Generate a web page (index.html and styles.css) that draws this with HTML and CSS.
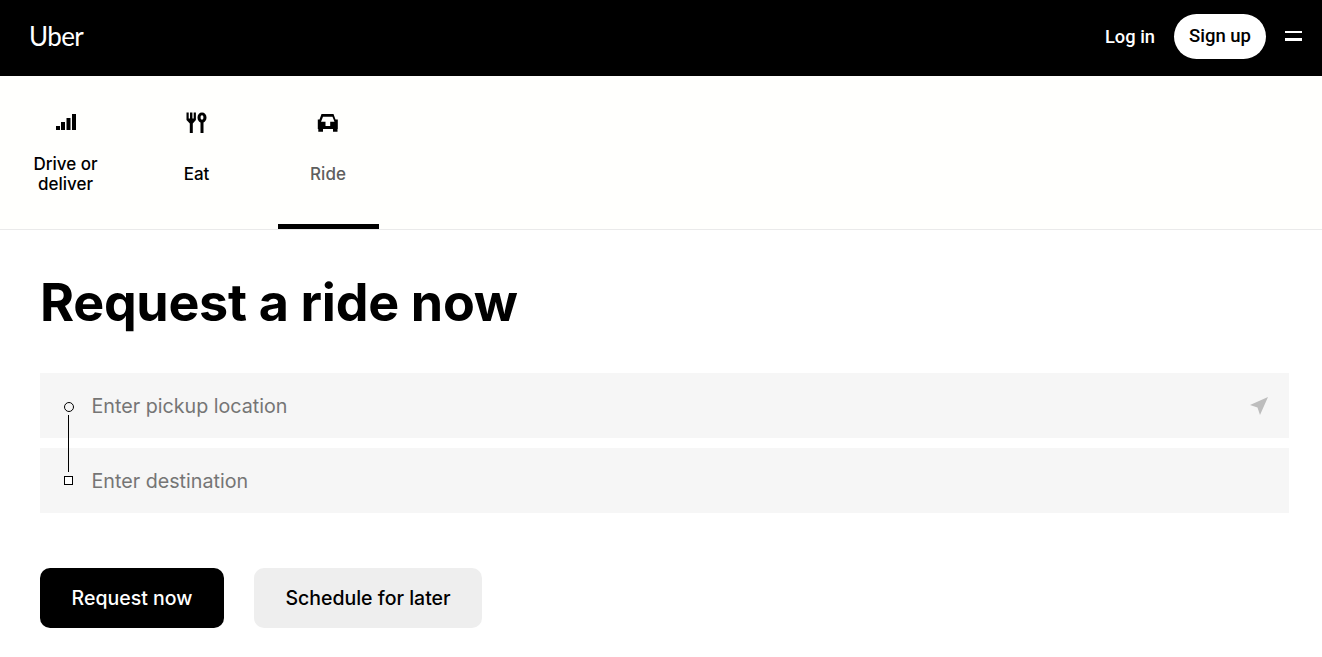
FILE: index.html
```html
<!DOCTYPE html>
<html lang="en">
<head>
<meta charset="utf-8">
<title>Uber</title>
<link rel="stylesheet" href="styles.css">
</head>
<body>
<header class="topbar">
  <a class="logo">Uber</a>
  <div class="top-actions">
    <a class="login">Log in</a>
    <a class="signup">Sign up</a>
    <span class="burger"><i></i><i></i></span>
  </div>
</header>
<nav class="tabs">
  <a class="tab">
    <svg class="tab-icon" viewBox="0 0 24 24"><path d="M2 15h4v4H2zM7 11h4v8H7zM12.500 7h4v12h-4zM18 3h4v16h-4z" fill="#000"/></svg>
    <span class="tab-label">Drive or deliver</span>
  </a>
  <a class="tab">
    <svg class="tab-icon" viewBox="0 0 24 24"><path fill-rule="evenodd" fill="#000" d="M1.500 1.500h2.200v6h1.300v-6h2.400v6h1.300v-6h2.200V9L7.800 12.500V22H4.800V12.500L1.500 9zM17 1.500c2.600 0 4.500 2 4.500 5 0 2.400-1.200 4.200-3 4.900V22h-3V11.400c-1.800-.7-3-2.500-3-4.900 0-3 1.900-5 4.500-5zm0 2.800c-.9 0-1.400.9-1.400 2.200s.5 2.200 1.400 2.200 1.400-.9 1.400-2.200-.5-2.200-1.400-2.200z"/></svg>
    <span class="tab-label">Eat</span>
  </a>
  <a class="tab tab-active">
    <svg class="tab-icon" viewBox="0 0 24 24"><path fill-rule="evenodd" fill="#000" d="M5.500 3h12l2 5.500h2.300V18h-.3v2.700H17V18H7v2.700H2.300V18h-.5V8.500h1.700zM7 5.700l-2 5h4.500V15h4.700v-4.300h4.300l-2-5z"/></svg>
    <span class="tab-label">Ride</span>
  </a>
</nav>
<main class="content">
  <h1 class="title">Request a ride now</h1>
  <div class="fields">
    <div class="field">
      <span class="marker marker-circle"></span>
      <span class="placeholder">Enter pickup location</span>
      <svg class="locate" viewBox="0 0 20 20"><path d="M19 1 11 19 8.500 11.500 1 9z" fill="#bdbdbd"/></svg>
    </div>
    <div class="field">
      <span class="marker marker-square"></span>
      <span class="placeholder">Enter destination</span>
    </div>
    <span class="connector"></span>
  </div>
  <div class="actions">
    <a class="btn btn-primary">Request now</a>
    <a class="btn btn-secondary">Schedule for later</a>
  </div>
</main>
</body>
</html>
```
FILE: styles.css
```css
* { box-sizing: border-box; }
html, body { margin: 0; height: 100%; overflow: hidden; }
body { background: #fff; color: #000; font-family: Inter, "Liberation Sans", sans-serif; }

.topbar {
  height: 76px; background: #000; color: #fff;
  display: flex; align-items: center; justify-content: space-between;
  padding: 0 20px 4px 30px;
}
.logo { font-family: Lato, sans-serif; font-size: 26px; font-weight: 400; letter-spacing: -0.6px; margin-left: -1px; }
.top-actions { display: flex; align-items: center; }
.login { font-family: Roboto, sans-serif; font-size: 18.300px; font-weight: 500; margin-right: 19px; }
.signup {
  font-family: Roboto, sans-serif; font-size: 18.500px; font-weight: 500;
  background: #fff; color: #000; height: 45px; width: 92px; border-radius: 23px;
  display: flex; align-items: center; justify-content: center; margin-right: 19px;
}
.burger { display: flex; flex-direction: column; gap: 5px; width: 17px; }
.burger i { display: block; height: 3px; background: #fff; }
.burger i:first-child { height: 2px; }

.tabs {
  height: 154px; background: #fffffd; border-bottom: 1px solid #eaeaea;
  display: flex; gap: 30px; padding-left: 16px;
}
.tab { width: 101px; height: 153px; padding-right: 2px; display: flex; flex-direction: column; align-items: center; }
.tab-icon { width: 24px; height: 24px; margin-top: 35px; flex: none; }
.tab-label {
  flex: 1; display: flex; align-items: center; text-align: center; justify-content: center;
  font-size: 17px; font-weight: 500; line-height: 20px; padding: 0 0 16px;
}
.tab-active { border-bottom: 5px solid #000; padding-right: 1px; }
.tab-active .tab-label { color: #5e5e5e; padding-bottom: 11px; }

.content { padding: 0 33px 0 40px; }
.title {
  font-family: Inter, sans-serif; font-size: 52px; line-height: 64px; font-weight: 700;
  letter-spacing: -0.3px; margin: 41px 0 0;
}
.fields { position: relative; margin-top: 38px; display: flex; flex-direction: column; gap: 10px; }
.field { height: 65px; background: #f6f6f6; display: flex; align-items: center; padding: 0 20px 0 23px; }
.marker { width: 9px; height: 9px; border: 1px solid #000; background: #fff; margin-right: 19px; margin-left: 1px; flex: none; }
.marker-circle { width: 10px; height: 10px; border-radius: 50%; background: transparent; margin-top: 2px; margin-right: 18px; }
.placeholder { font-family: Inter, sans-serif; font-size: 19.700px; color: #757575; flex: 1; margin-left: -0.5px; }
.locate { width: 20px; height: 20px; flex: none; }
.connector { position: absolute; left: 28px; top: 42px; width: 1px; height: 57px; background: #000; }
.actions { display: flex; gap: 30px; margin-top: 55px; }
.btn {
  height: 60px; border-radius: 10px; display: flex; align-items: center; justify-content: center;
  font-size: 19.500px; font-weight: 500;
}
.btn-primary { width: 184px; background: #000; color: #fff; }
.btn-secondary { width: 228px; background: #eee; color: #000; }
```
